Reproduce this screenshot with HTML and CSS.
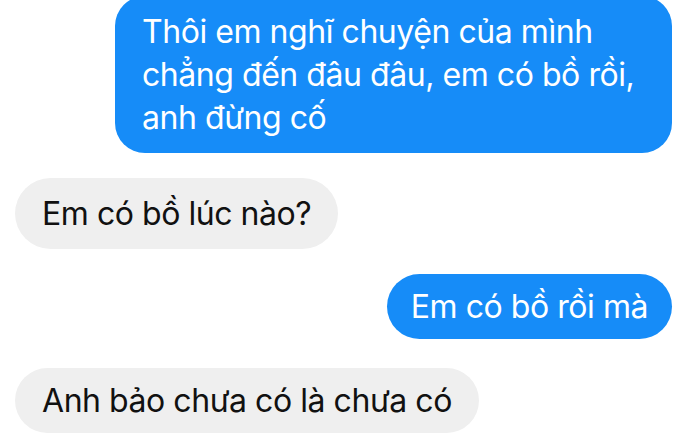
FILE: index.html
```html
<!DOCTYPE html>
<html lang="vi">
<head>
<meta charset="utf-8">
<link rel="stylesheet" href="styles.css">
</head>
<body>
<div class="chat">
  <div class="msg out first">Thôi em nghĩ chuyện của mình<br>chẳng đến đâu đâu, em có bồ rồi,<br>anh đừng cố</div>
  <div class="msg in">Em có bồ lúc nào?</div>
  <div class="msg out small">Em có bồ rồi mà</div>
  <div class="msg in small last">Anh bảo chưa có là chưa có</div>
</div>
</body>
</html>
```

FILE: styles.css
```css
html, body {
  margin: 0;
  padding: 0;
  background: #ffffff;
}
body {
  width: 700px;
  height: 437px;
  overflow: hidden;
}
.chat {
  display: flex;
  flex-direction: column;
  align-items: flex-start;
  padding: 0 28px 0 15px;
  margin-top: -4px;
  font-family: "Inter", "Noto Sans", sans-serif;
  font-size: 32px;
  line-height: 43px;
  letter-spacing: -0.45px;
}
.msg {
  white-space: nowrap;
  padding: 14px 27px;
  border-radius: 36px;
}
.msg.out {
  align-self: flex-end;
  background: #168cf8;
  color: #ffffff;
}
.msg.in {
  background: #efefef;
  color: #111111;
  margin-bottom: 25px;
}
.msg.first {
  width: 503px;
  border-radius: 30px;
  margin-bottom: 25px;
}
.msg.out.small {
  padding: 11px 24px;
  margin-bottom: 29px;
}
.msg.in.last {
  padding: 11px 27px;
}
```
